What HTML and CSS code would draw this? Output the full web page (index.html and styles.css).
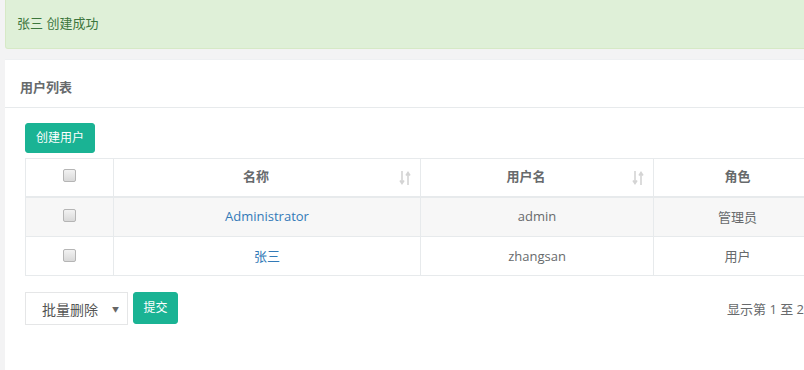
FILE: index.html
```html
<!DOCTYPE html>
<html lang="zh-CN">
<head>
    <meta charset="UTF-8">
    <meta name="viewport" content="width=device-width, initial-scale=1.0">
    <title>用户列表</title>
    <link rel="stylesheet" href="styles.css">
</head>
<body>
    <div class="wrapper">
        <div class="alert alert-success">张三 创建成功</div>

        <section class="ibox">
            <header class="ibox-title">
                <h5>用户列表</h5>
            </header>
            <div class="ibox-content">
                <div class="toolbar">
                    <button class="btn btn-primary">创建用户</button>
                </div>

                <table class="table">
                    <colgroup>
                        <col style="width: 88px">
                        <col style="width: 307px">
                        <col style="width: 233px">
                        <col style="width: 168px">
                    </colgroup>
                    <thead>
                        <tr>
                            <th><input type="checkbox" class="check"></th>
                            <th class="sortable">名称
                                <svg class="sort-icon" width="12" height="16" viewBox="0 0 12 16">
                                    <path d="M3 1v12M1 10.5l2 3 2-3" />
                                    <path d="M9 15V3M7 5.5l2-3 2 3" />
                                </svg>
                            </th>
                            <th class="sortable">用户名
                                <svg class="sort-icon" width="12" height="16" viewBox="0 0 12 16">
                                    <path d="M3 1v12M1 10.5l2 3 2-3" />
                                    <path d="M9 15V3M7 5.5l2-3 2 3" />
                                </svg>
                            </th>
                            <th>角色</th>
                        </tr>
                    </thead>
                    <tbody>
                        <tr class="striped">
                            <td><input type="checkbox" class="check"></td>
                            <td><a href="#">Administrator</a></td>
                            <td>admin</td>
                            <td>管理员</td>
                        </tr>
                        <tr>
                            <td><input type="checkbox" class="check"></td>
                            <td><a href="#">张三</a></td>
                            <td>zhangsan</td>
                            <td>用户</td>
                        </tr>
                    </tbody>
                </table>

                <div class="table-footer">
                    <div class="bulk-actions">
                        <div class="select">
                            <span>批量删除</span>
                            <span class="caret">▼</span>
                        </div>
                        <button class="btn btn-primary btn-submit">提交</button>
                    </div>
                    <div class="pagination-detail">显示第 1 至 2 项结果，共 2 项</div>
                </div>
            </div>
        </section>
    </div>
</body>
</html>
```

FILE: styles.css
```css
* {
    box-sizing: border-box;
}

body {
    margin: 0;
    background-color: #f3f3f4;
    font-family: "Open Sans", "Noto Sans CJK SC", sans-serif;
    font-size: 13px;
    color: #676a6c;
    overflow: hidden;
}

.wrapper {
    width: 1100px;
    padding: 0 5px;
}

.alert {
    height: 49px;
    padding: 13px 11px 15px;
    line-height: 20px;
    font-size: 13px;
    border: 1px solid #d6e9c6;
    border-top: none;
    border-radius: 0 0 3px 3px;
    margin-bottom: 10px;
}

.alert-success {
    background-color: #dff0d8;
    color: #3c763d;
}

.ibox {
    background-color: #fff;
}

.ibox-title {
    height: 48px;
    padding: 13px 15px 0;
    border-top: 1px solid #eef0f2;
}

.ibox-title h5 {
    margin: 0;
    font-size: 13px;
    font-weight: 700;
    line-height: 16px;
    padding-top: 6px;
}

.ibox-content {
    border-top: 1px solid #e7eaec;
    padding: 15px 20px 80px;
}

.toolbar {
    margin-bottom: 5px;
}

.btn {
    font-family: inherit;
    font-size: 12px;
    line-height: 18px;
    border-radius: 3px;
    border: 1px solid transparent;
    cursor: pointer;
}

.btn-primary {
    background-color: #1ab394;
    border-color: #1ab394;
    color: #fff;
    height: 30px;
    padding: 5px 10px;
    width: 70px;
}

.table {
    border-collapse: collapse;
    table-layout: fixed;
    width: 796px;
    border: 1px solid #e7eaec;
}

.table th,
.table td {
    border: 1px solid #e7eaec;
    text-align: center;
    vertical-align: middle;
}

.table th {
    height: 38px;
    font-weight: 700;
    font-size: 13px;
    color: #676a6c;
    border-bottom: 2px solid #e7eaec;
    padding: 0 8px 3px;
}

.table th.sortable {
    position: relative;
    padding-right: 30px;
}

.sort-icon {
    position: absolute;
    right: 9px;
    top: 11px;
    fill: none;
    stroke: #d4d4d4;
    stroke-width: 1.6;
}

.table td {
    height: 39px;
    padding: 0 8px 1px;
}

.table tr.striped td {
    background-color: #f7f7f7;
    height: 40px;
}

.table a {
    color: #337ab7;
    text-decoration: none;
}

.check {
    appearance: none;
    width: 13px;
    height: 13px;
    margin: 3px 0 0;
    border: 1px solid #b5b5b5;
    border-radius: 2px;
    background: linear-gradient(#f2f2f2, #d9d9d9);
}

.table-footer {
    display: grid;
    grid-template-columns: 702px auto;
    align-items: center;
    margin-top: 16px;
}

.bulk-actions {
    display: flex;
    gap: 5px;
}

.select {
    display: flex;
    align-items: center;
    width: 103px;
    height: 33px;
    padding: 0 8px 0 16px;
    border: 1px solid #e5e6e7;
    font-size: 14px;
    color: #555;
}

.select .caret {
    margin-left: auto;
    font-size: 7px;
    color: #666;
}

.btn-submit {
    width: 45px;
    height: 32px;
    padding: 5px 0;
}

.pagination-detail {
    font-size: 13px;
    white-space: nowrap;
}
```
